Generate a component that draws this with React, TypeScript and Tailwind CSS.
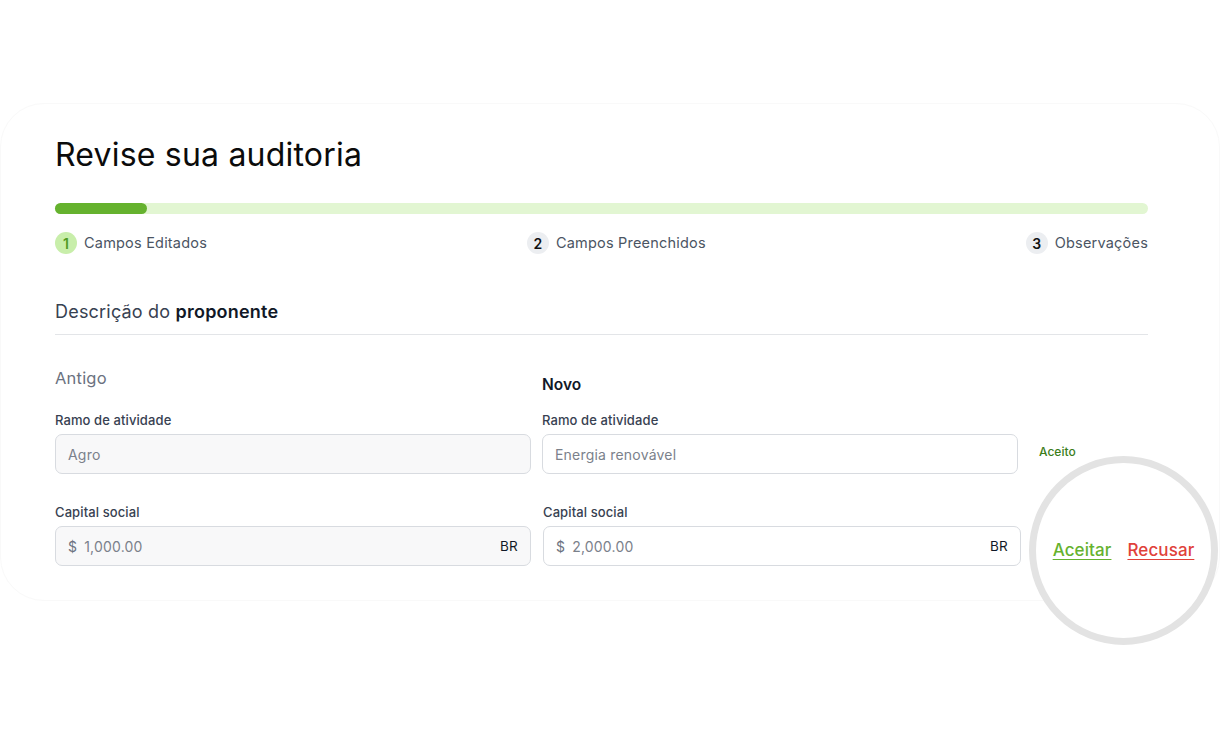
import React from "react";

const font = { fontFamily: "Inter, 'Noto Sans', sans-serif" };

function Step({ n, label, active }: { n: number; label: string; active?: boolean }) {
  return (
    <div className="flex items-center gap-[7px]">
      <span
        className={`flex h-[22px] w-[22px] items-center justify-center rounded-full text-[14px] font-semibold ${
          active ? "bg-[#c8eeaa] text-[#4f9a22]" : "bg-[#eceef1] text-[#111111]"
        }`}
      >
        {n}
      </span>
      <span className="text-[14.5px] tracking-[0.2px] text-[#4b5563]">{label}</span>
    </div>
  );
}

function Field({
  label,
  value,
  old,
  suffix,
  prefix,
}: {
  label: string;
  value: string;
  old?: boolean;
  suffix?: string;
  prefix?: string;
}) {
  return (
    <div className="flex flex-col">
      <label className="mb-[5px] h-[18px] text-[13px] font-medium leading-[18px] tracking-[0.1px] text-[#374151]">{label}</label>
      <div
        className={`flex h-[40px] items-center rounded-[7px] border border-[#d8dbe0] px-[12px] text-[14px] tracking-[0.2px] ${
          old ? "bg-[#f8f8f9]" : "bg-white"
        }`}
      >
        {prefix && <span className="mr-[7px] text-[#6b7280]">{prefix}</span>}
        <span className="flex-1 text-[#7b818b]">{value}</span>
        {suffix && <span className="text-[13.5px] text-[#111827]">{suffix}</span>}
      </div>
    </div>
  );
}

export default function App() {
  return (
    <div className="relative h-[750px] w-[1220px] overflow-hidden bg-white" style={font}>
      <div className="mt-[103px] h-[498px] w-[1220px] rounded-[44px] border border-[#f9f9f9] pl-[54px] pr-[71px] pt-[31px]">
        <h1 className="h-[40px] text-[32px] leading-[40px] tracking-[0.2px] text-[#0b0b0b]">Revise sua auditoria</h1>

        {/* progress */}
        <div className="mt-[28px] h-[11px] w-full rounded-full bg-[#e2f6d2]">
          <div className="h-[11px] w-[92px] rounded-full bg-[#65b22e]" />
        </div>

        <div className="mt-[18px] flex items-center justify-between">
          <Step n={1} label="Campos Editados" active />
          <Step n={2} label="Campos Preenchidos" />
          <Step n={3} label="Observações" />
        </div>

        {/* section */}
        <div className="mt-[46px] border-b border-[#e3e5e8] pb-[10px]">
          <h2 className="h-[24px] text-[18px] leading-[24px] tracking-[0.2px] text-[#374151]">
            Descrição do <span className="font-semibold text-[#111827]">proponente</span>
          </h2>
        </div>

        <div className="mt-[31px] grid grid-cols-[476px_476px_1fr] gap-x-[11px]">
          <div className="flex flex-col">
            <div className="h-[24px] text-[16.5px] leading-[24px] tracking-[0.2px] text-[#6b7280]">Antigo</div>
            <div className="mt-[21px]">
              <Field label="Ramo de atividade" value="Agro" old />
            </div>
            <div className="mt-[29px]">
              <Field label="Capital social" value="1,000.00" prefix="$" suffix="BR" old />
            </div>
          </div>
          <div className="flex flex-col">
            <div className="mt-[7px] h-[24px] text-[15.5px] font-semibold leading-[24px] text-[#111827]">Novo</div>
            <div className="mt-[14px]">
              <Field label="Ramo de atividade" value="Energia renovável" />
            </div>
            <div className="-mr-[3px] mt-[29px] pl-[1px]">
              <Field label="Capital social" value="2,000.00" prefix="$" suffix="BR" />
            </div>
          </div>
          <div className="relative">
            <div className="absolute left-[10px] top-[77px] text-[12px] font-medium text-[#3b7d1a]">Aceito</div>
          </div>
        </div>
      </div>

      {/* highlight circle */}
      <div className="absolute left-[1029px] top-[456px] flex h-[189px] w-[189px] items-center justify-center rounded-full border-[7px] border-[#e3e3e3] bg-white">
        <div className="mt-[1px] flex items-center gap-[16px] text-[17px] font-medium tracking-[0.1px]">
          <button className="text-[#65b22e] underline underline-offset-[3px]">Aceitar</button>
          <button className="text-[#e0413a] underline underline-offset-[3px]">Recusar</button>
        </div>
      </div>
    </div>
  );
}
